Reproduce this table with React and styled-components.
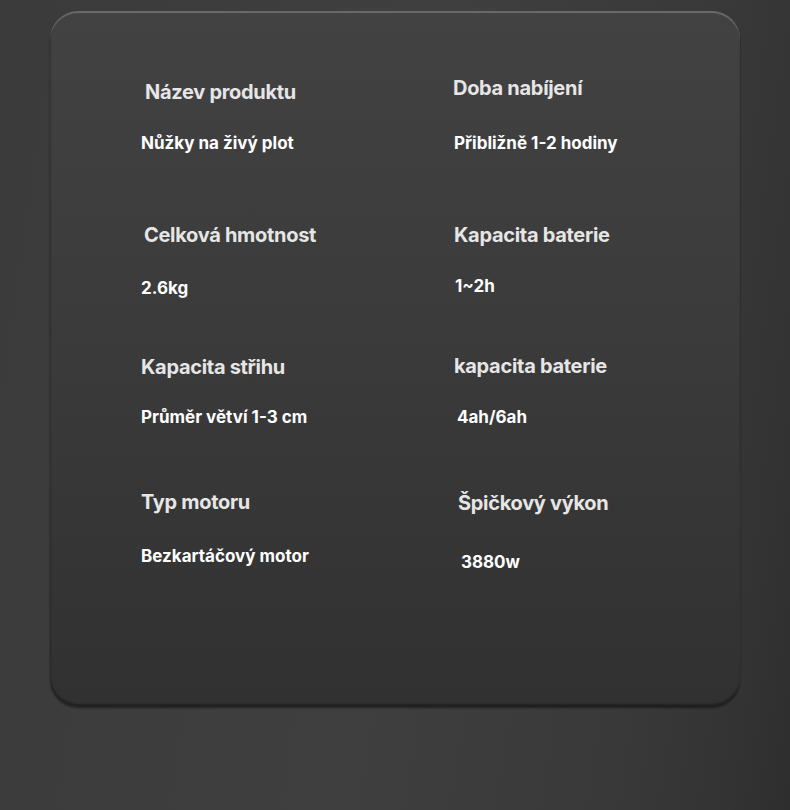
import styled, { createGlobalStyle } from "styled-components";

const specs = [
  { title: "Název produktu", value: "Nůžky na živý plot", hx: 4, hy: 4, vx: 0, gap: 29 },
  { title: "Doba nabíjení", value: "Přibližně 1-2 hodiny", hx: 0, hy: 0, vx: 1, gap: 33 },
  { title: "Celková hmotnost", value: "2.6kg", hx: 3, hy: 0, vx: 0, gap: 31 },
  { title: "Kapacita baterie", value: "1~2h", hx: 1, hy: 0, vx: 2, gap: 29 },
  { title: "Kapacita střihu", value: "Průměr větví 1-3 cm", hx: 0, hy: 1, vx: 0, gap: 28 },
  { title: "kapacita baterie", value: "4ah/6ah", hx: 1, hy: 0, vx: 4, gap: 29 },
  { title: "Typ motoru", value: "Bezkartáčový motor", hx: 0, hy: 0, vx: 0, gap: 32 },
  { title: "Špičkový výkon", value: "3880w", hx: 5, hy: 1, vx: 8, gap: 37 },
];

export default function App() {
  return (
    <Page>
      <GlobalStyle />
      <Card>
        <SpecGrid>
          {specs.map((s) => (
            <Spec key={s.title + s.value}>
              <Title $dx={s.hx} $dy={s.hy}>
                {s.title}
              </Title>
              <Value $dx={s.vx} $gap={s.gap}>
                {s.value}
              </Value>
            </Spec>
          ))}
        </SpecGrid>
      </Card>
    </Page>
  );
}

const GlobalStyle = createGlobalStyle`
  html, body {
    margin: 0;
    padding: 0;
    background: #383838;
  }
  * {
    box-sizing: border-box;
  }
`;

const Page = styled.main`
  width: 790px;
  height: 810px;
  padding: 11px 50px 0;
  font-family: Inter, "Noto Sans", sans-serif;
  background: linear-gradient(
    98deg,
    #3b3b3b 0%,
    #3f3f3f 50%,
    #393939 80%,
    #333333 93%,
    #2e2e2e 100%
  );
  overflow: hidden;
`;

const Card = styled.section`
  width: 690px;
  height: 695px;
  border-radius: 28px;
  background: linear-gradient(180deg, #424242 0%, #3b3b3b 45%, #313131 100%);
  box-shadow:
    inset 0 2px 1px rgba(255, 255, 255, 0.22),
    inset 1px 0 1px rgba(0, 0, 0, 0.15),
    inset 0 -2px 2px rgba(0, 0, 0, 0.35),
    0 2px 2px rgba(0, 0, 0, 0.45);
  padding: 65px 0 0 91px;
`;

const SpecGrid = styled.div`
  display: grid;
  grid-template-columns: 312px 1fr;
  grid-template-rows: 147px 131px 136px auto;
`;

const Spec = styled.div`
  display: flex;
  flex-direction: column;
  align-items: flex-start;
`;

const Title = styled.h3`
  margin: ${(p) => p.$dy}px 0 0 ${(p) => p.$dx}px;
  font-size: 20px;
  line-height: 24px;
  font-weight: 700;
  letter-spacing: -0.3px;
  color: #e6e6e6;
`;

const Value = styled.p`
  margin: ${(p) => p.$gap}px 0 0 ${(p) => p.$dx}px;
  font-size: 17px;
  line-height: 20px;
  font-weight: 700;
  letter-spacing: 0;
  color: #ffffff;
`;
